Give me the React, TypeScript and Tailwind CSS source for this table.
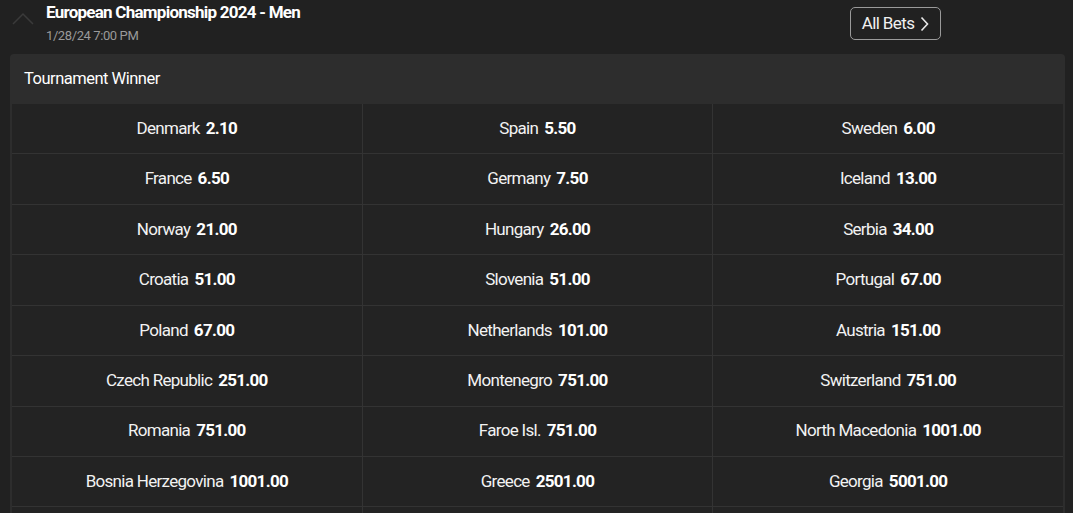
import React from "react";

const rows: [string, string][][] = [
  [["Denmark", "2.10"], ["Spain", "5.50"], ["Sweden", "6.00"]],
  [["France", "6.50"], ["Germany", "7.50"], ["Iceland", "13.00"]],
  [["Norway", "21.00"], ["Hungary", "26.00"], ["Serbia", "34.00"]],
  [["Croatia", "51.00"], ["Slovenia", "51.00"], ["Portugal", "67.00"]],
  [["Poland", "67.00"], ["Netherlands", "101.00"], ["Austria", "151.00"]],
  [["Czech Republic", "251.00"], ["Montenegro", "751.00"], ["Switzerland", "751.00"]],
  [["Romania", "751.00"], ["Faroe Isl.", "751.00"], ["North Macedonia", "1001.00"]],
  [["Bosnia Herzegovina", "1001.00"], ["Greece", "2501.00"], ["Georgia", "5001.00"]],
  [["", ""], ["", ""], ["", ""]],
];

export default function App() {
  return (
    <div
      className="w-[1073px] h-[513px] overflow-hidden bg-[#212121] text-white"
      style={{ fontFamily: "Roboto, 'Liberation Sans', sans-serif" }}
    >
      <div className="flex items-start h-[54px]">
        <div className="w-[46px] flex justify-center pt-[12px]">
          <svg width="22" height="14" viewBox="0 0 22 14" fill="none">
            <path d="M1 12 L11 2 L21 12" stroke="#3a3a3a" strokeWidth="1.5" />
          </svg>
        </div>
        <div className="flex-1 pt-[2px]">
          <div className="text-[17px] font-bold leading-[21px] tracking-[-0.75px] text-white">
            European Championship 2024 - Men
          </div>
          <div className="text-[13px] leading-[16px] mt-[5px] text-[#9a9a9a] tracking-[-0.4px]">
            1/28/24 7:00 PM
          </div>
        </div>
        <div className="w-[222px] pt-[7px] flex">
          <button className="ml-[-1px] h-[33px] w-[91px] rounded-[5px] border border-[#9a9a9a] flex items-center justify-center gap-[6px] text-[17px] text-[#f0f0f0] tracking-[-0.6px]">
            <span>All Bets</span>
            <svg width="9" height="16" viewBox="0 0 9 16" fill="none">
              <path d="M1.5 1.5 L7.5 8 L1.5 14.5" stroke="#e8e8e8" strokeWidth="1.6" />
            </svg>
          </button>
        </div>
      </div>
      <div className="mx-[10px] w-[1055px] bg-[#2d2d2d] rounded-t-[4px] px-[2px]">
        <div className="h-[50px] flex items-center px-[12px] text-[16.5px] tracking-[-0.5px] text-white">
          Tournament Winner
        </div>
        <div className="grid grid-cols-3 gap-px bg-[#333333] auto-rows-[49.43px]">
          {rows.flat().map(([n, o], i) => (
            <div
              key={i}
              className="bg-[#232323] flex items-center justify-center gap-[6px] text-[17px] tracking-[-0.7px]"
            >
              <span className="text-[#f2f2f2]">{n}</span>
              <span className="font-bold text-white">{o}</span>
            </div>
          ))}
        </div>
      </div>
    </div>
  );
}
